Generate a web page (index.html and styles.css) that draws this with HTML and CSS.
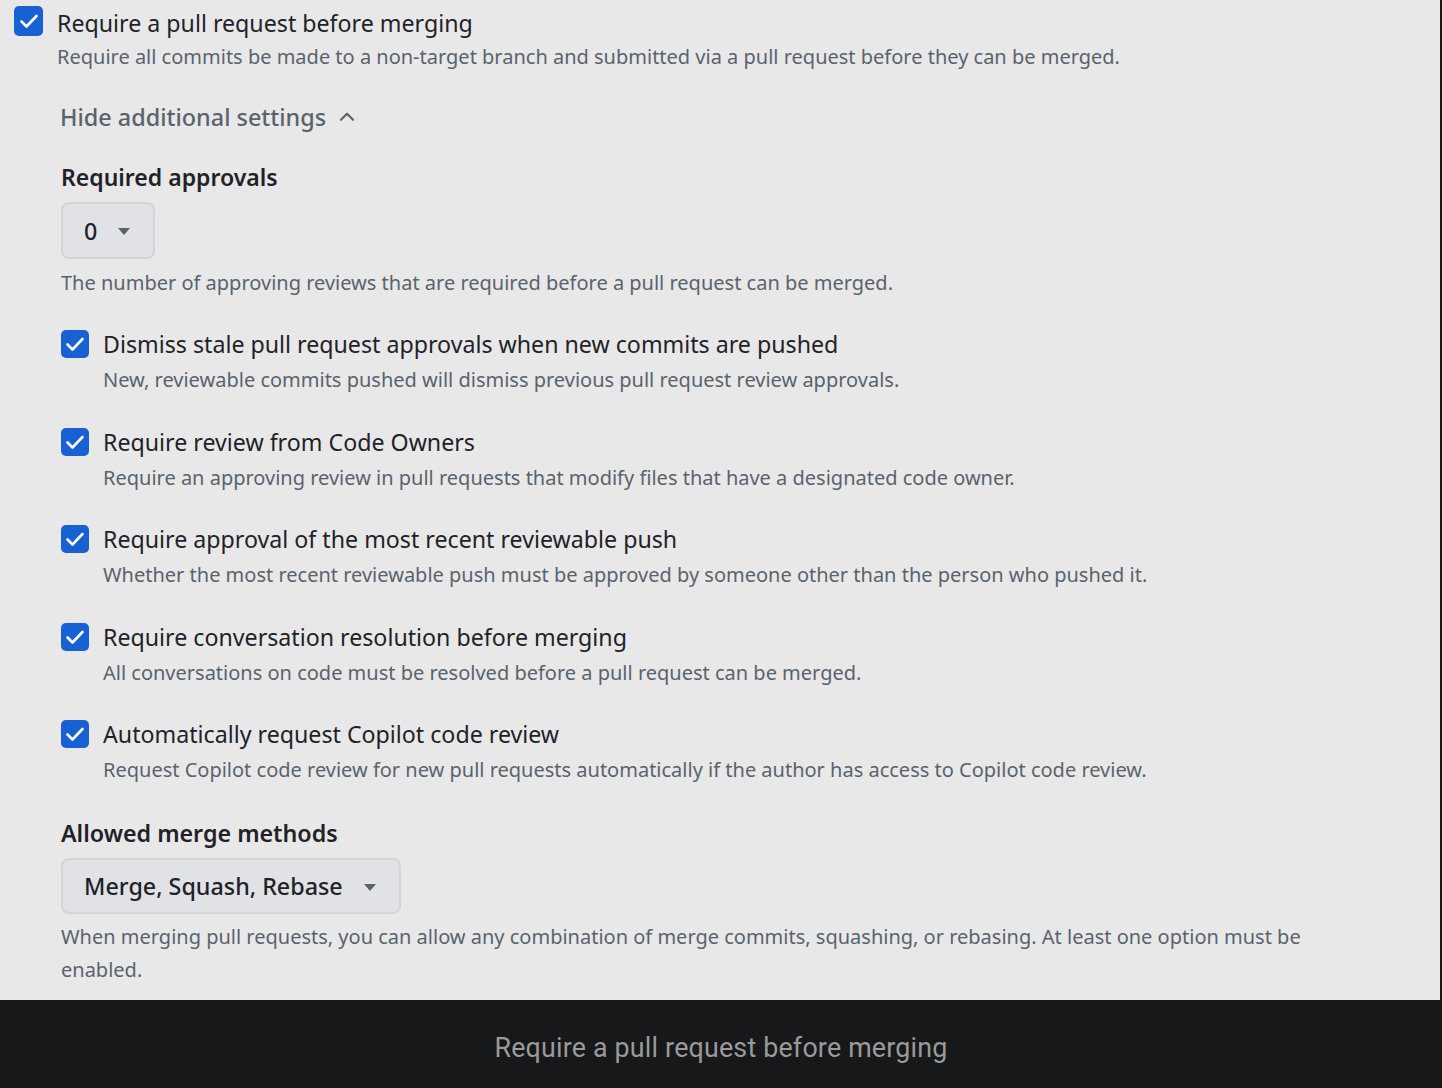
FILE: index.html
```html
<!DOCTYPE html>
<html lang="en">
<head>
<meta charset="utf-8">
<title>Require a pull request before merging</title>
<link rel="stylesheet" href="styles.css">
</head>
<body>
<div class="frame">
  <main class="panel">
    <div class="row top-row">
      <span class="cb cb-lg"><svg viewBox="0 0 28 28" width="28" height="28"><path d="M6.5 14.5 L11.5 19.5 L21.5 9" fill="none" stroke="#fff" stroke-width="2.6" stroke-linecap="round" stroke-linejoin="round"/></svg></span>
      <div class="text">
        <div class="title">Require a pull request before merging</div>
        <div class="desc">Require all commits be made to a non-target branch and submitted via a pull request before they can be merged.</div>
      </div>
    </div>

    <section class="inner">
      <div class="toggle">Hide additional settings <svg class="chev" viewBox="0 0 16 10" width="18" height="11"><path d="M2.5 8 L8 2.5 L13.5 8" fill="none" stroke="#59636e" stroke-width="2" stroke-linecap="round" stroke-linejoin="round"/></svg></div>

      <div class="label">Required approvals</div>
      <div class="select select-num"><span>0</span><span class="caret"></span></div>
      <div class="desc note">The number of approving reviews that are required before a pull request can be merged.</div>

      <div class="items">
        <div class="row item">
          <span class="cb"><svg viewBox="0 0 28 28" width="28" height="28"><path d="M6.5 14.5 L11.5 19.5 L21.5 9" fill="none" stroke="#fff" stroke-width="2.6" stroke-linecap="round" stroke-linejoin="round"/></svg></span>
          <div class="text">
            <div class="title">Dismiss stale pull request approvals when new commits are pushed</div>
            <div class="desc">New, reviewable commits pushed will dismiss previous pull request review approvals.</div>
          </div>
        </div>
        <div class="row item">
          <span class="cb"><svg viewBox="0 0 28 28" width="28" height="28"><path d="M6.5 14.5 L11.5 19.5 L21.5 9" fill="none" stroke="#fff" stroke-width="2.6" stroke-linecap="round" stroke-linejoin="round"/></svg></span>
          <div class="text">
            <div class="title">Require review from Code Owners</div>
            <div class="desc">Require an approving review in pull requests that modify files that have a designated code owner.</div>
          </div>
        </div>
        <div class="row item">
          <span class="cb"><svg viewBox="0 0 28 28" width="28" height="28"><path d="M6.5 14.5 L11.5 19.5 L21.5 9" fill="none" stroke="#fff" stroke-width="2.6" stroke-linecap="round" stroke-linejoin="round"/></svg></span>
          <div class="text">
            <div class="title">Require approval of the most recent reviewable push</div>
            <div class="desc">Whether the most recent reviewable push must be approved by someone other than the person who pushed it.</div>
          </div>
        </div>
        <div class="row item">
          <span class="cb"><svg viewBox="0 0 28 28" width="28" height="28"><path d="M6.5 14.5 L11.5 19.5 L21.5 9" fill="none" stroke="#fff" stroke-width="2.6" stroke-linecap="round" stroke-linejoin="round"/></svg></span>
          <div class="text">
            <div class="title">Require conversation resolution before merging</div>
            <div class="desc">All conversations on code must be resolved before a pull request can be merged.</div>
          </div>
        </div>
        <div class="row item">
          <span class="cb"><svg viewBox="0 0 28 28" width="28" height="28"><path d="M6.5 14.5 L11.5 19.5 L21.5 9" fill="none" stroke="#fff" stroke-width="2.6" stroke-linecap="round" stroke-linejoin="round"/></svg></span>
          <div class="text">
            <div class="title">Automatically request Copilot code review</div>
            <div class="desc">Request Copilot code review for new pull requests automatically if the author has access to Copilot code review.</div>
          </div>
        </div>
      </div>

      <div class="label label-merge">Allowed merge methods</div>
      <div class="select select-merge"><span>Merge, Squash, Rebase</span><span class="caret"></span></div>
      <div class="desc note wrap">When merging pull requests, you can allow any combination of merge commits, squashing, or rebasing. At least one option must be enabled.</div>
    </section>
  </main>
  <footer class="caption">Require a pull request before merging</footer>
</div>
</body>
</html>
```

FILE: styles.css
```css
* { box-sizing: border-box; }
html, body { margin: 0; padding: 0; }
body {
  background: #17181a;
  font-family: "Noto Sans", "Open Sans", sans-serif;
  color: #1f2328;
}
.frame {
  width: 1442px;
  height: 1088px;
  display: flex;
  flex-direction: column;
}
.panel {
  width: 1440px;
  height: 1000px;
  background: #e8e8e8;
  padding: 6px 0 0 14px;
  display: flex;
  flex-direction: column;
}
.caption {
  height: 88px;
  display: flex;
  align-items: center;
  justify-content: center;
  font-family: Roboto, "Noto Sans", sans-serif;
  font-size: 26.8px;
  letter-spacing: 0.2px;
  color: #9a9a9a;
  padding-top: 8px;
}
.row {
  display: flex;
  align-items: flex-start;
}
.cb {
  flex: none;
  width: 28px;
  height: 28px;
  border-radius: 5px;
  background: #1761d4;
  display: flex;
  align-items: center;
  justify-content: center;
}
.cb-lg {
  width: 29px;
  height: 30px;
}
.top-row .text { margin-left: 14px; }
.item .cb { margin-top: 3px; }
.item .text { margin-left: 14px; }
.title {
  font-size: 23.2px;
  line-height: 34px;
  color: #1f2328;
  white-space: nowrap;
}
.desc {
  font-size: 20px;
  line-height: 33px;
  color: #59636e;
  white-space: nowrap;
}
.text .desc { margin-top: 2px; }
.top-row .desc { margin-top: 0; }
.inner {
  padding-left: 47px;
  display: flex;
  flex-direction: column;
  align-items: flex-start;
}
.toggle {
  margin-top: 27px;
  margin-left: -1px;
  font-size: 23.4px;
  line-height: 34px;
  font-weight: 500;
  color: #59636e;
  display: flex;
  align-items: center;
  gap: 12px;
}
.chev { margin-top: -2px; }
.label {
  margin-top: 26px;
  font-size: 23px;
  line-height: 34px;
  font-weight: 600;
  color: #1f2328;
}
.label-merge { margin-top: 30px; font-size: 23.25px; }
.select {
  margin-top: 8px;
  height: 57px;
  border: 2px solid #d1d4d9;
  border-radius: 8px;
  background: #e1e2e5;
  display: flex;
  align-items: center;
  padding: 0 23px 0 21px;
  font-size: 23.3px;
  font-weight: 500;
  color: #1f2328;
  gap: 21px;
}
.select-merge { height: 56px; }
.caret {
  width: 0;
  height: 0;
  border-left: 6.5px solid transparent;
  border-right: 6.5px solid transparent;
  border-top: 7px solid #59636e;
  margin-top: 2px;
}
.note {
  margin-top: 7px;
}
.items {
  margin-top: 28px;
  display: flex;
  flex-direction: column;
  gap: 28.5px;
}
.wrap {
  white-space: normal;
  width: 1250px;
  margin-top: 6px;
}
```
